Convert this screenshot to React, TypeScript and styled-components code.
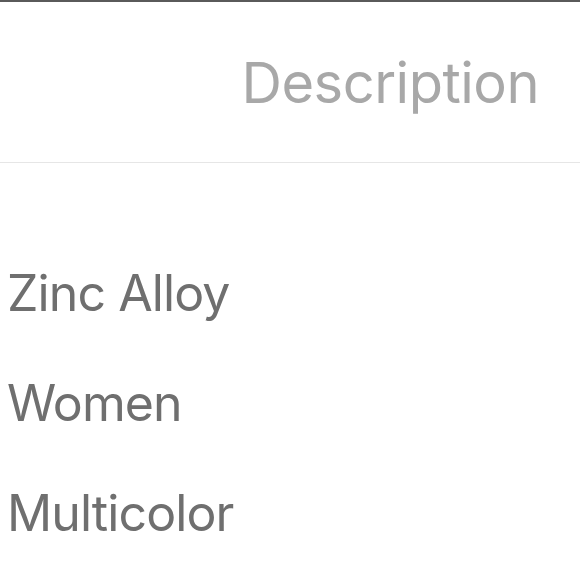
import React from "react";
import styled, { createGlobalStyle } from "styled-components";

const Global = createGlobalStyle`
  html, body { margin: 0; padding: 0; background: #fff; }
  body { font-family: Inter, "Noto Sans", sans-serif; }
`;

const Page = styled.div`
  width: 580px;
  height: 580px;
  overflow: hidden;
  border-top: 2px solid #5a5a5a;
  box-sizing: border-box;
  display: flex;
  flex-direction: column;
`;

const Header = styled.div`
  height: 161px;
  border-bottom: 1px solid #e6e6e6;
  display: flex;
  justify-content: flex-end;
  align-items: center;
  padding-right: 41px;
  box-sizing: border-box;
`;

const Title = styled.div`
  font-size: 56px;
  color: #a8a8a8;
  font-weight: 400;
  letter-spacing: -0.5px;
  padding-top: 2px;
`;

const List = styled.div`
  display: flex;
  flex-direction: column;
  padding: 98px 0 0 7px;
  gap: 46px;
`;

const Item = styled.div`
  font-size: 50px;
  line-height: 64px;
  color: #6f6f6f;
  letter-spacing: -0.9px;
`;

export default function App() {
  return (
    <>
      <Global />
      <Page>
        <Header>
          <Title>Description</Title>
        </Header>
        <List>
          <Item>Zinc Alloy</Item>
          <Item>Women</Item>
          <Item>Multicolor</Item>
        </List>
      </Page>
    </>
  );
}
